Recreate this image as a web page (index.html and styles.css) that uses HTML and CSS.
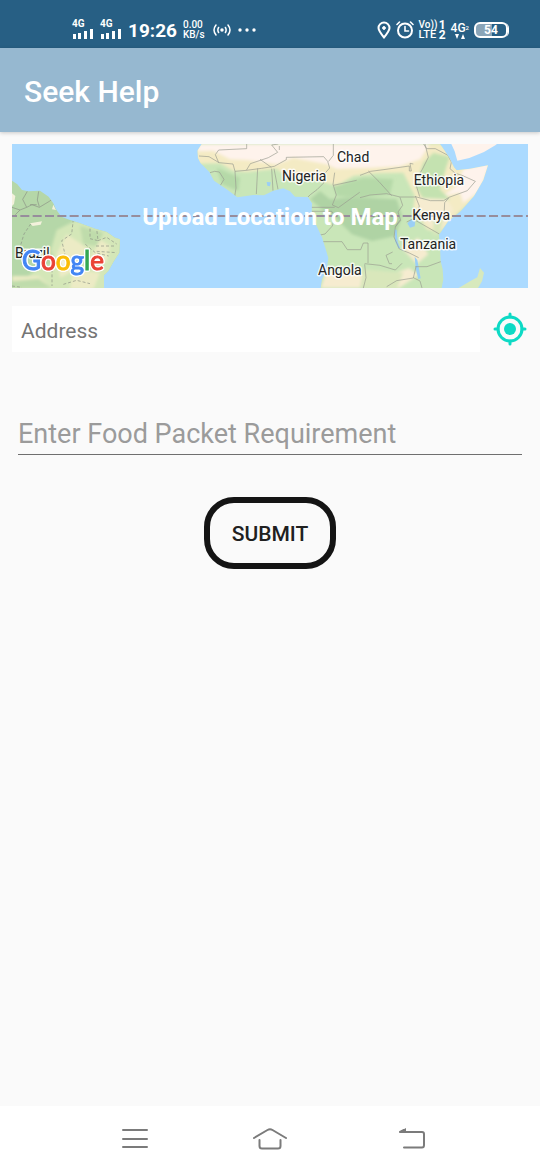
FILE: index.html
```html
<!DOCTYPE html>
<html lang="en">
<head>
<meta charset="utf-8">
<meta name="viewport" content="width=device-width, initial-scale=1">
<title>Seek Help</title>
<link rel="stylesheet" href="styles.css">
</head>
<body>
<div class="status">
  <div class="status-group">
    <div class="signal"><span>4G</span>
      <svg width="22" height="10" viewBox="0 0 22 10"><path d="M1 5h3v5H1zM6 4h3v6H6zM12 2h3v8h-3zM18 0h3v10h-3z"/></svg></div>
    <div class="signal"><span>4G</span>
      <svg width="22" height="10" viewBox="0 0 22 10"><path d="M1 5h3v5H1zM6 4h3v6H6zM12 2h3v8h-3zM18 0h3v10h-3z"/></svg></div>
    <span class="clock">19:26</span>
    <div class="stack speed"><span>0.00</span><span>KB/s</span></div>
    <svg class="hotspot" width="18" height="12" viewBox="0 0 18 12" fill="none" stroke="#fff" stroke-width="1.5" stroke-linecap="round"><circle cx="9" cy="6" r="1" fill="#fff"/><path d="M5.600 3.500q-1.500 2.500 0 5M12.400 3.500q1.500 2.500 0 5M3 1q-4 5 0 10M15 1q4 5 0 10"/></svg>
    <svg class="dots" width="18" height="4" viewBox="0 0 18 4"><circle cx="2" cy="2" r="1.700"/><circle cx="9" cy="2" r="1.700"/><circle cx="16" cy="2" r="1.700"/></svg>
  </div>
  <div class="status-group status-right">
    <svg width="14" height="18" viewBox="0 0 14 18" fill="none" stroke="#fff" stroke-width="2"><path d="M7 16.500C3.500 12 1.500 9.500 1.500 7a5.500 5.500 0 0 1 11 0c0 2.500-2 5-5.500 9.500z"/><circle cx="7" cy="7" r="1.400" fill="#fff" stroke-width="1"/></svg>
    <svg width="18" height="18" viewBox="0 0 18 18" fill="none" stroke="#fff" stroke-width="2" stroke-linecap="round"><circle cx="9" cy="9.500" r="7"/><path d="M9 5.500V10h3.500M1 3.500L3.500 1M17 3.500L14.500 1" stroke-width="1.600"/></svg>
    <div class="stack volte"><span class="pair"><span class="vo">Vo))</span><b>1</b></span><span class="pair"><span>LTE</span><b>2</b></span></div>
    <div class="data"><span class="pair"><span>4G</span><small>2</small></span>
      <svg width="10" height="5" viewBox="0 0 10 5"><path d="M0 0h4L2 5zM6 5h4L8 0z"/></svg></div>
    <div class="battery"><span>54</span></div>
  </div>
</div>

<header class="appbar"><h1>Seek Help</h1></header>

<main class="content">
  <button class="map" type="button">
    <svg class="map-art" viewBox="36 24 1548 432" preserveAspectRatio="xMidYMid slice" aria-hidden="true">
      <defs>
        <clipPath id="africa"><path d="M605 24L592 44 594 66 602 82 628 108 642 134 680 160 712 184 760 177 792 178 820 164 850 157 870 166 885 182 924 183 936 202 935 238 948 266 966 304 976 336 985 366 980 400 966 430 962 456H1325L1330 430 1328 400 1322 376 1320 330 1317 296 1345 255 1382 226 1422 180 1450 132 1464 88 1410 98 1370 103 1362 94 1348 66 1334 44 1320 24z"/></clipPath>
        <clipPath id="america"><path d="M36 134L52 145 66 162 84 166 120 164 146 182 160 202 168 220 184 242 210 252 240 262 285 278 320 288 345 305 360 310 358 350 340 378 325 405 312 418 312 456H36z"/></clipPath>
        <filter id="soft" x="-10%" y="-10%" width="120%" height="120%"><feGaussianBlur stdDeviation="5"/></filter>
      </defs>
      <path fill="#abdaff" d="M36 24h1548v432H36z"/>
      <g clip-path="url(#africa)">
        <path fill="#c9e6b8" d="M580 24h900v432H580z"/>
        <g filter="url(#soft)">
          <path fill="#f4ebc4" d="M580 24H1480V180L1420 190 1370 235 1320 290 1280 280 1240 215 1245 180 1210 110 1130 112 1060 120 1010 150 940 128 860 122 830 98 740 108 700 105 660 82 580 84z"/>
          <path fill="#fef3ec" d="M600 24H1290L1260 70 1200 90 1110 95 1010 98 980 85 880 65 830 85 740 72 690 70 640 44 590 46z"/>
          <path fill="#fef3ec" d="M1390 100L1470 80 1440 165 1390 200 1380 170 1330 180 1370 150z"/>
          <path fill="#c4e2b0" d="M1270 80L1300 50 1350 62 1340 90 1320 160 1350 190 1310 200 1270 190 1245 150z"/>
          <path fill="#afd3a4" d="M930 190l30-25 30 25 50-5 60 0 90 5 16 50-20 60-70 15-60-20-50-50-40-25z"/>
          <path fill="#b5d9a8" d="M1000 150l90-25 90 5-10 45-100 10-60-5zM650 95l70 30-5 40-50-20z"/>
          <path fill="#f6ecd0" d="M1250 185l90 5 20 30-40 70-50-35zM962 456l15-45 90 0 60 20 100-35 30 20-60 40zM1205 335l50-30 30 50-35 30z"/>
          <path fill="#d9e7bb" d="M1090 400l120 10-20 50-110-4zM1300 250l30 0-10 40-20 10z"/>
        </g>
        <path fill="#9bcff5" d="M1222 262l12-12 12 5-2 16-14 4zM1184 280l6 2 3 35 8 20-6 0-10-22zM1244 362l8 10 10 55-7 2-8-32zM800 138l12 1-2 12-8-2z"/>
        <g fill="none" stroke="#989b90" stroke-width="2">
          <path d="M597 60l30 2 30 18 42 4 6 22 3 50-5 32M630 110l14-4 14 2 14 22-12 20-22 2M656 80l-10-24 10-14 84-4v-14M705 106l34-3 12-20 54-18 28-16-18-22 20-3M739 103l46-6 38-6 36-20 0-7 112-2 12 14 6 20-18 20 0 25-20 20-20 15-12 12M773 97l-4 77M815 98l4 66M822 98l12 62M780 70l34 24M838 30v12M986 76l14-18v-34M1004 110l-5 35 10 32-12 30 18 8 50-36 14-10"/>
          <path d="M1080 118l32-12 46-6 70-10v15h6l-4-23 10 2M1105 105l32 32 38 42M1000 148l70-15M930 214h74M935 226h60l10 14-8 30-22 24-40 8M966 317h60l16 24h40l8-20h14l0 60M1080 185l30-8 50-4 40 10 46 0M1246 182l45 12 40 0 16-10 55-20 24-28-40-18-20-6-16-14 4-20-10-20-38-20-26 0-16-24M1346 186l-12 14-2 42M1200 184l8 24-14 20 8 25-16 20-4 30 16 36 30 12 28 14M1246 180l12 30-10 34-28 14M1248 254l70 40M1200 252l-14 20M1176 383l-8 0-10-25 20-10M1094 383l46 5 46 14 20-20M1246 392l35 0 44-16M1248 392l-8 34-50 8-30 18M1094 385l4 40-8 31M1240 425l20 10 6 21M1275 24l10 40-18 36-22 36 14 46"/>
        </g>
      </g>
      <path fill="#fef3ec" d="M1354 24l10 22 8 28 36-8 44-18 34-20 5-4z"/>
      <path fill="#d7e9bd" d="M1376 456l34-20 22-12 8-28 12 14-6 26-12 20z"/>
      <g clip-path="url(#america)">
        <path fill="#b5d7a8" d="M36 130h340v330H36z"/>
        <g filter="url(#soft)">
          <path fill="#d4e7b8" d="M170 282l60-30 140 40v170H36l70-60 60-20-14-40z"/>
          <path fill="#ecebc5" d="M170 355l30-60 60 40-20 60-60 30zM300 310l30 20-10 50-50-10zM36 420l80 0 40 36H36zM220 400l80 10-20 50h-70z"/>
          <path fill="#bfdcab" d="M240 270l70 20-20 40-40-5zM36 436l80-8 40 28H36z"/>
        </g>
        <path fill="#f3f1dc" d="M90 262l36-6-4 10-24 4zM36 172l10 8-4 24-6 6zM160 206l8 16-12-2zM180 370l24 10-12 14z"/>
        <g fill="none" stroke="#8b9185" stroke-width="2">
          <path d="M36 214l24 8 20-8-12-24 14-24M80 214l16-8 22 8 30-18 8-6M118 212l-6-20 4-26M60 222l-14 14M90 206h20"/>
          <path stroke-dasharray="9 6" d="M92 264l-20 30-12 40M220 250l-5 44-30 20 10 40-30 26M270 278l0 30 24 6-4-36M294 314l26-10 30 20M288 330l60 0M290 346l60 4M256 325l30 25 40 10M156 400v50M190 445l40-12 40 10M36 450l30 4"/>
        </g>
      </g>
      <path fill="none" stroke="#978d9c" stroke-width="6" stroke-dasharray="27 10" stroke-dashoffset="12" d="M36 240h1548"/>
      <g class="places">
        <text x="1011" y="77">Chad</text>
        <text x="846" y="135">Nigeria</text>
        <text x="1241" y="148">Ethiopia</text>
        <text x="1237" y="253">Kenya</text>
        <text x="1200" y="340">Tanzania</text>
        <text x="954" y="418">Angola</text>
        <text x="45" y="366">Brazil</text>
      </g>
      <text class="brand" x="66" y="403"><tspan fill="#4285f4" stroke="#4285f4">G</tspan><tspan fill="#ea4335" stroke="#ea4335">o</tspan><tspan fill="#fbbc05" stroke="#fbbc05">o</tspan><tspan fill="#4285f4" stroke="#4285f4">g</tspan><tspan fill="#34a853" stroke="#34a853">l</tspan><tspan fill="#ea4335" stroke="#ea4335">e</tspan></text>
    </svg>
    <span class="map-label">Upload Location to Map</span>
  </button>

  <div class="address-row">
    <input class="address" type="text" placeholder="Address" aria-label="Address">
    <button class="locate" type="button" aria-label="Use my location">
      <svg width="34" height="34" viewBox="0 0 34 34"><g fill="none" stroke="#0ddac5" stroke-width="3"><circle cx="17" cy="17" r="12"/><path d="M17 2v3M17 29v3M2 17h3M29 17h3" stroke-linecap="round"/></g><circle cx="17" cy="17" r="6" fill="#0ddac5"/></svg>
    </button>
  </div>

  <input class="packets" type="text" placeholder="Enter Food Packet Requirement" aria-label="Enter Food Packet Requirement">
  <button class="submit" type="submit">SUBMIT</button>
</main>

<nav class="navbar">
  <button type="button" aria-label="Recent apps"><svg width="36" height="24" viewBox="0 0 36 24"><path d="M10 3h24M10 12h24M10 20h24"/></svg></button>
  <button type="button" aria-label="Home"><svg width="36" height="24" viewBox="0 0 36 24"><path d="M2 11L15.500 3q2.500-1.500 5 0L34 11M7.500 13v6q0 2.500 2.500 2.500h16q2.500 0 2.500-2.500v-6"/></svg></button>
  <button type="button" aria-label="Back"><svg width="36" height="24" viewBox="0 0 36 24"><path d="M13 3L9 5h22q2 0 2 2v11q0 2.500-2 2.500H13"/><path class="tip" d="M15 1v4H8z"/></svg></button>
</nav>
</body>
</html>
```
FILE: styles.css
```css
* { box-sizing: border-box; }
body {
  margin: 0;
  min-height: 100vh;
  display: flex;
  flex-direction: column;
  background: #fafafa;
  font-family: Roboto, "Noto Sans", sans-serif;
}
button, input { font-family: inherit; border: 0; margin: 0; padding: 0; background: none; }
svg { display: block; flex: none; }

.status {
  display: flex;
  justify-content: space-between;
  height: 48px;
  padding: 12px 30px 0 72px;
  background: #275f84;
  color: #fff;
  fill: #fff;
}
.status-group { display: flex; align-items: center; gap: 6px; height: 36px; }
.signal { display: flex; flex-direction: column; font-size: 10px; line-height: 9px; font-weight: 700; padding-bottom: 2px; }
.signal svg { margin-top: 1px; }
.clock { font-size: 19px; font-weight: 700; }
.stack { display: flex; flex-direction: column; font-size: 10px; line-height: 10px; font-weight: 500; }
.stack.speed { width: 22px; }
.hotspot { margin-left: 2px; }
.dots { margin-left: 1px; }
.pair { display: flex; justify-content: space-between; }
.status-right { gap: 5px; }
.stack.volte { width: 27px; font-size: 11px; white-space: nowrap; }
.stack.volte b { font-size: 12px; }
.stack.volte .vo { font-size: 10px; }
.data { display: flex; flex-direction: column; align-items: center; font-size: 12px; line-height: 12px; font-weight: 500; }
.data small { font-size: 6px; }
.battery {
  width: 34px;
  height: 16px;
  margin-right: 2px;
  border: 2px solid #fff;
  border-radius: 6px;
  background: linear-gradient(90deg, #8aa5b8 54%, transparent 54%);
  box-shadow: 2px 0 0 -1px #fff;
  font-size: 12px;
  line-height: 12px;
  font-weight: 700;
  text-align: center;
}

.appbar {
  display: flex;
  align-items: center;
  height: 84px;
  padding: 2px 24px 0;
  background: #96b8d0;
  box-shadow: 0 1px 4px rgba(0, 0, 0, .2);
}
.appbar h1 { margin: 0; color: #fff; font-size: 30px; font-weight: 500; }

.content { flex: 1; display: flex; flex-direction: column; padding: 12px; }
.map { display: grid; height: 144px; overflow: hidden; cursor: pointer; }
.map-art, .map-label { grid-area: 1 / 1; }
.map-art { width: 100%; height: 144px; }
.map-label { place-self: center; padding-top: 2px; color: #fff; font-size: 24px; font-weight: 700; z-index: 1; }
.places { font-size: 42px; fill: #222; stroke: #fff; stroke-width: 9px; stroke-opacity: .8; stroke-linejoin: round; paint-order: stroke; }
.brand {
  font-family: Lato, sans-serif;
  font-size: 78px;
  font-weight: 400;
  stroke-width: 3px;
  filter: drop-shadow(3px 0 0 #fff) drop-shadow(-3px 0 0 #fff) drop-shadow(0 3px 0 #fff) drop-shadow(0 -3px 0 #fff);
}

.address-row { display: flex; align-items: center; gap: 12px; margin-top: 18px; }
.address { flex: 1; min-width: 0; height: 46px; padding: 4px 9px 0; background: #fff; color: #222; font-size: 21px; }
.address::placeholder { color: #757575; opacity: 1; }
.locate { width: 36px; height: 46px; display: grid; place-items: center; cursor: pointer; }

.packets { height: 48px; margin: 55px 6px 0; padding: 7px 0 0; border-bottom: 1px solid #6f6f6f; color: #222; font-size: 27px; }
.packets::placeholder { color: #9b9b9b; opacity: 1; }

.submit {
  align-self: center;
  width: 132px;
  height: 72px;
  margin-top: 42px;
  padding-top: 2px;
  border: 6px solid #141414;
  border-radius: 30px;
  color: #202020;
  font-size: 21px;
  font-weight: 500;
  cursor: pointer;
}

.navbar { display: flex; justify-content: center; align-items: center; gap: 19%; height: 64px; padding-top: 2px; background: #fff; }
.navbar button { width: 36px; height: 48px; display: grid; place-items: center; cursor: pointer; }
.navbar svg { fill: none; stroke: #7b7b7b; stroke-width: 2; stroke-linecap: round; stroke-linejoin: round; }
.navbar .tip { fill: #7b7b7b; stroke: none; }
```
